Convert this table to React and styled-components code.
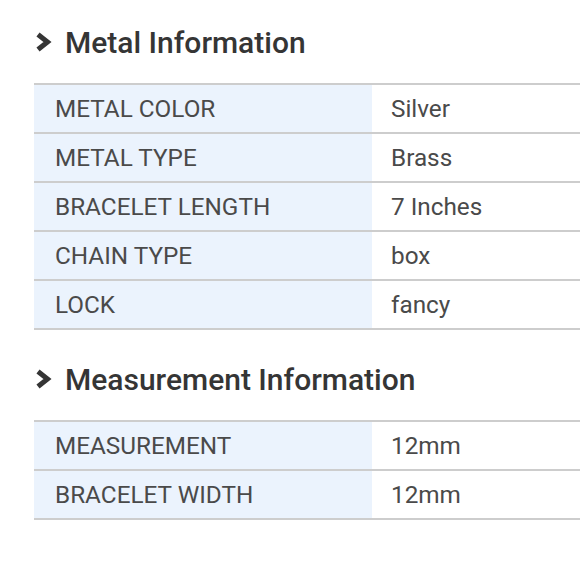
import React from "react";
import styled, { createGlobalStyle } from "styled-components";

const GlobalStyle = createGlobalStyle`
  html, body {
    margin: 0;
    padding: 0;
    background: #ffffff;
    font-family: Roboto, "Liberation Sans", sans-serif;
  }
`;

const sections = [
  {
    title: "Metal Information",
    rows: [
      ["METAL COLOR", "Silver"],
      ["METAL TYPE", "Brass"],
      ["BRACELET LENGTH", "7 Inches"],
      ["CHAIN TYPE", "box"],
      ["LOCK", "fancy"],
    ],
  },
  {
    title: "Measurement Information",
    rows: [
      ["MEASUREMENT", "12mm"],
      ["BRACELET WIDTH", "12mm"],
    ],
  },
];

const Page = styled.div`
  width: 580px;
  height: 580px;
  overflow: hidden;
  padding: 23px 0 0 34px;
  box-sizing: border-box;
`;

const Section = styled.section`
  margin-bottom: 30px;
`;

const Title = styled.h2`
  display: flex;
  align-items: center;
  gap: 12px;
  margin: 0 0 22px 0;
  height: 38px;
  font-size: 30px;
  font-weight: 500;
  color: #353535;
`;

const Chevron = () => (
  <svg width="18" height="20" viewBox="0 0 18 20" style={{ marginLeft: 1 }}>
    <path d="M3 2.5 L12.5 10 L3 17.5" fill="none" stroke="#353535" strokeWidth="5" strokeLinejoin="miter" />
  </svg>
);

const Table = styled.div`
  width: 546px;
  border-top: 2px solid #cdcdcd;
`;

const Row = styled.div`
  display: grid;
  grid-template-columns: 338px 1fr;
  height: 47px;
  border-bottom: 2px solid #cdcdcd;
`;

const Label = styled.div`
  background: #ebf3fd;
  display: flex;
  align-items: center;
  padding-left: 21px;
  font-size: 24.3px;
  color: #4a4a4a;
`;

const Value = styled.div`
  display: flex;
  align-items: center;
  padding-left: 19px;
  font-size: 24.3px;
  color: #4a4a4a;
`;

export default function App() {
  return (
    <>
      <GlobalStyle />
      <Page>
        {sections.map((s) => (
          <Section key={s.title}>
            <Title>
              <Chevron />
              {s.title}
            </Title>
            <Table>
              {s.rows.map(([k, v]) => (
                <Row key={k}>
                  <Label>{k}</Label>
                  <Value>{v}</Value>
                </Row>
              ))}
            </Table>
          </Section>
        ))}
      </Page>
    </>
  );
}
